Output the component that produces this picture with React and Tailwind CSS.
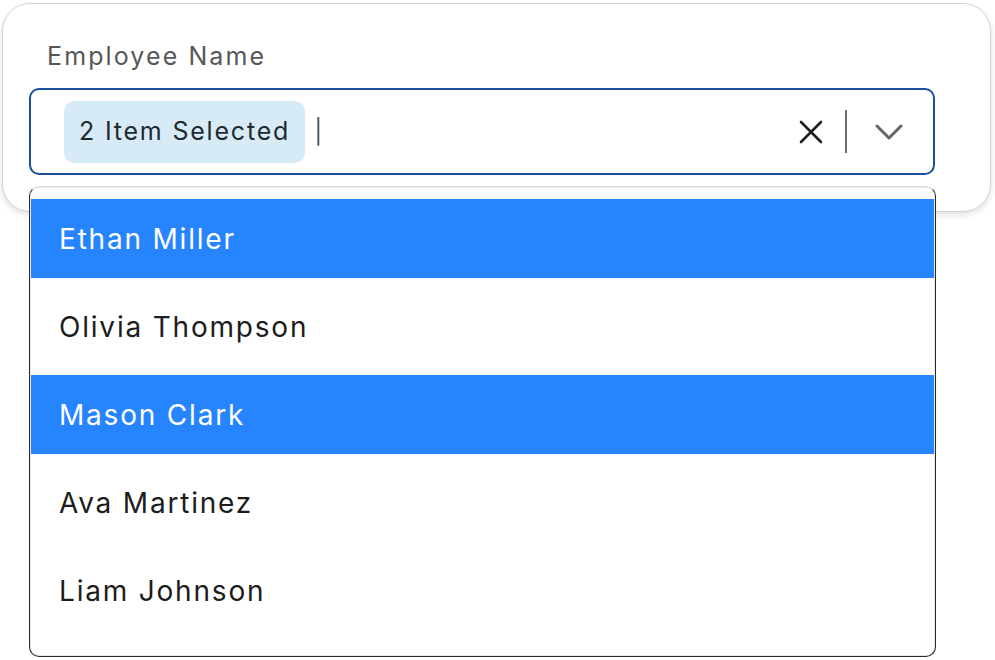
import { useState } from "react";

const employees = [
  "Ethan Miller",
  "Olivia Thompson",
  "Mason Clark",
  "Ava Martinez",
  "Liam Johnson",
];

function App() {
  const [selected, setSelected] = useState(["Ethan Miller", "Mason Clark"]);

  const toggle = (name) => {
    setSelected((prev) =>
      prev.includes(name) ? prev.filter((n) => n !== name) : [...prev, name]
    );
  };

  return (
    <div
      className="w-[995px] h-[660px] bg-white overflow-hidden relative"
      style={{ fontFamily: "Inter, 'Open Sans', sans-serif" }}
    >
      <div className="ml-[2px] mt-[3px] w-[989px] h-[209px] rounded-[28px] border border-[#d2d2d2] bg-white shadow-[0_3px_6px_rgba(0,0,0,0.12)] pl-[26px] pt-[36px]">
        <label className="block pl-[18px] text-[25px] leading-[32px] text-[#575757] tracking-[2.1px]">
          Employee Name
        </label>
        <div className="relative mt-[16px] w-[906px]">
          <div className="h-[87px] rounded-[10px] border-2 border-[#1c4f9e] bg-white flex items-center pl-[33px] pr-[30px]">
            <span className="h-[62px] px-[15px] rounded-[10px] bg-[#d7ebf7] flex items-center text-[25px] text-[#1f2a30] tracking-[1.8px]">
              {selected.length} Item Selected
            </span>
            <span className="ml-[9px] text-[24px] text-[#555] leading-none">|</span>
            <div className="flex-1" />
            <button className="w-[26px] h-[26px] flex items-center justify-center">
              <svg width="24" height="24" viewBox="0 0 24 24" fill="none" stroke="#1f1f1f" strokeWidth="2.6" strokeLinecap="round">
                <path d="M2 2 L22 22 M22 2 L2 22" />
              </svg>
            </button>
            <div className="ml-[21px] w-[2px] h-[43px] bg-[#6f6f6f]" />
            <button className="ml-[28px] w-[28px] h-[20px] flex items-center justify-center">
              <svg width="28" height="18" viewBox="0 0 28 18" fill="none" stroke="#666" strokeWidth="3" strokeLinecap="round" strokeLinejoin="round">
                <path d="M2 3 L14 15 L26 3" />
              </svg>
            </button>
          </div>

          <div className="absolute left-0 top-[98px] w-[907px] h-[471px] rounded-[10px] border border-[#2a2a2a] border-t-[#dcdcdc] bg-white shadow-[inset_0_0_0_1px_#e6e6e6] pt-[12px] px-[1px] flex flex-col gap-[9px]">
            {employees.map((name) => {
              const active = selected.includes(name);
              return (
                <div
                  key={name}
                  onClick={() => toggle(name)}
                  className={`h-[79px] shrink-0 flex items-center pl-[28px] text-[28px] tracking-[1.8px] cursor-pointer ${
                    active ? "bg-[#2684ff] text-white" : "text-[#1c1c1c]"
                  }`}
                >
                  {name}
                </div>
              );
            })}
          </div>
        </div>
      </div>
    </div>
  );
}

export default App;
